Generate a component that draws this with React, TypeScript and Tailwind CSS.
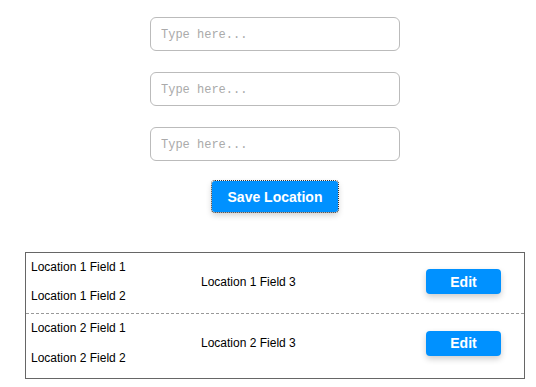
const rows = [1, 2];

function LocationRow({ n, last }: { n: number; last?: boolean }) {
  return (
    <div
      className={`flex items-center pl-[5px] pt-[7px] ${
        last ? "pb-[13px]" : "pb-[10px] border-b border-dashed border-[#999]"
      }`}
    >
      <div className={`flex w-[170px] flex-col ${last ? "gap-[16px]" : "gap-[15px]"}`}>
        <span>Location {n} Field 1</span>
        <span>Location {n} Field 2</span>
      </div>
      <span className="flex-1">Location {n} Field 3</span>
      <button className="mr-[23px] h-[25px] w-[75px] rounded-[4px] bg-[#0091ff] text-[14px] font-bold text-white shadow-[0_3px_6px_rgba(0,0,0,0.2)]">
        Edit
      </button>
    </div>
  );
}

export default function App() {
  return (
    <div className="min-h-[387px] bg-white pl-[14px] pt-[17px] font-['Liberation_Sans',Arial,sans-serif] text-[12px] leading-[14px] text-black">
      <div className="flex flex-col items-center">
        <div className="flex flex-col gap-[21px]">
          {[0, 1, 2].map((i) => (
            <input
              key={i}
              placeholder="Type here..."
              className="h-[34px] w-[250px] rounded-[6px] border border-[#bbb] px-[10px] pt-[2px] font-['Liberation_Mono',monospace] text-[12px] placeholder:text-[#aaa] outline-none"
            />
          ))}
        </div>
        <button className="mt-[20px] h-[31px] w-[126px] rounded-[3px] bg-[#0091ff] text-[14px] font-bold text-white shadow-[0_3px_6px_rgba(0,0,0,0.2)] outline outline-1 outline-dotted outline-[#333]">
          Save Location
        </button>
        <div className="mt-[40px] w-[500px] border border-[#666]">
          {rows.map((n, i) => (
            <LocationRow key={n} n={n} last={i === rows.length - 1} />
          ))}
        </div>
      </div>
    </div>
  );
}
